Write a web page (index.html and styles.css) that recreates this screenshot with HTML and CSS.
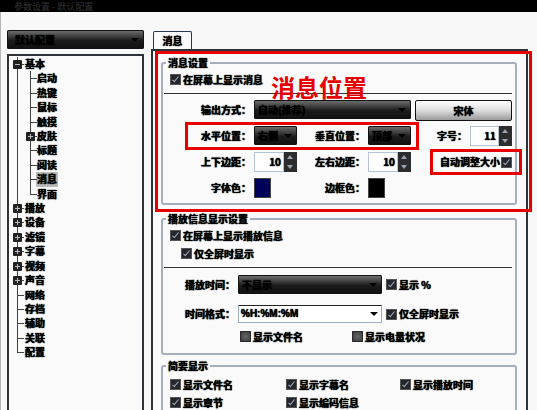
FILE: index.html
```html
<!DOCTYPE html>
<html lang="zh">
<head>
	<meta charset="utf-8">
	<title>消息设置</title>
	<link rel="stylesheet" href="styles.css">
</head>
<body>
	<div class="titlebar">参数设置 - 默认配置</div>

	<div class="main">
		<div class="sidebar">
			<div class="combo profile">默认配置</div>
			<div class="treeBox">
				<ul class="tree root">
					<li class="open"><span class="node">基本</span>
						<ul class="tree">
							<li>启动</li>
							<li>热键</li>
							<li>鼠标</li>
							<li>触摸</li>
							<li class="closed"><span class="node">皮肤</span></li>
							<li>标题</li>
							<li>阅读</li>
							<li><span class="selected">消息</span></li>
							<li>界面</li>
						</ul>
					</li>
					<li class="closed"><span class="node">播放</span></li>
					<li class="closed"><span class="node">设备</span></li>
					<li class="closed"><span class="node">滤镜</span></li>
					<li class="closed"><span class="node">字幕</span></li>
					<li class="closed"><span class="node">视频</span></li>
					<li class="closed"><span class="node">声音</span></li>
					<li>网络</li>
					<li>存档</li>
					<li>辅助</li>
					<li>关联</li>
					<li>配置</li>
				</ul>
			</div>
		</div>

		<div class="content">
			<div class="tab">消息</div>
			<div class="panel">
				<fieldset class="group first">
					<legend>消息设置</legend>
					<label class="check rowOne"><input type="checkbox" checked>在屏幕上显示消息</label>
					<div class="rule"></div>
					<div class="form">
						<span class="lbl">输出方式：</span>
						<div class="combo wide">自动(推荐)</div>
						<div class="fontBtn">宋体</div>

						<span class="lbl">水平位置：</span>
						<div class="combo">右侧</div>
						<span class="lbl">垂直位置：</span>
						<div class="combo">顶部</div>
						<span class="lbl">字号：</span>
						<div class="spin"><span class="val">11</span><span class="arrows"></span></div>

						<span class="lbl">上下边距：</span>
						<div class="spin"><span class="val">10</span><span class="arrows"></span></div>
						<span class="lbl">左右边距：</span>
						<div class="spin"><span class="val">10</span><span class="arrows"></span></div>
						<label class="check autoSize">自动调整大小<input type="checkbox" checked></label>

						<span class="lbl">字体色：</span>
						<div class="swatch navy"></div>
						<span class="lbl">边框色：</span>
						<div class="swatch black"></div>
					</div>
				</fieldset>

				<fieldset class="group second">
					<legend>播放信息显示设置</legend>
					<label class="check rowOne"><input type="checkbox" checked>在屏幕上显示播放信息</label>
					<label class="check rowSub"><input type="checkbox" checked>仅全屏时显示</label>
					<div class="rule"></div>
					<div class="timeForm">
						<span class="lbl">播放时间：</span>
						<div class="combo">不显示</div>
						<label class="check"><input type="checkbox" checked>显示 %</label>

						<span class="lbl">时间格式：</span>
						<div class="textCombo">%H:%M:%M</div>
						<label class="check"><input type="checkbox" checked>仅全屏时显示</label>
					</div>
					<div class="extras">
						<label class="check"><input type="checkbox">显示文件名</label>
						<label class="check"><input type="checkbox">显示电量状况</label>
					</div>
				</fieldset>

				<fieldset class="group third">
					<legend>简要显示</legend>
					<div class="brief">
						<label class="check"><input type="checkbox" checked>显示文件名</label>
						<label class="check"><input type="checkbox" checked>显示字幕名</label>
						<label class="check"><input type="checkbox" checked>显示播放时间</label>
						<label class="check"><input type="checkbox" checked>显示章节</label>
						<label class="check"><input type="checkbox" checked>显示编码信息</label>
					</div>
				</fieldset>
			</div>
		</div>
	</div>

	<!-- red annotations drawn over the dialog -->
	<div class="mark markMain"></div>
	<div class="mark markPos"></div>
	<div class="mark markAuto"></div>
	<div class="markTitle">消息位置</div>
</body>
</html>
```

FILE: styles.css
```css
:root {
	--ink: #000;
	--red: #e60000;
	--frame: #2f3338;
	--groupLine: #a3afbd;
}

html, body {
	margin: 0;
	height: 100%;
}

body {
	position: relative;
	width: 537px;
	height: 410px;
	overflow: hidden;
	background-color: #f8f8f8;
	font-family: "Noto Sans CJK SC", "Liberation Sans", sans-serif;
	font-size: 10px;
	font-weight: 700;
	line-height: 12px;
	color: var(--ink);
	text-shadow: 0 0 1px #000, 0 0 1px rgba(0, 0, 0, .8);
}

.titlebar {
	height: 12px;
	padding-left: 14px;
	background-color: #000;
	color: #333;
	font-size: 9px;
	font-weight: 400;
	line-height: 13px;
	text-shadow: none;
}

.main {
	display: flex;
	height: 398px;
	padding-left: 6px;
	border-left: 1px solid #b5b5b5;
}

/* left column */
.sidebar {
	width: 137px;
	margin-right: 7px;
	padding-top: 18px;
	flex: none;
}

.combo {
	position: relative;
	height: 19px;
	padding-left: 4px;
	border-radius: 2px;
	line-height: 19px;
	background: linear-gradient(#757575, #1c1c1c 55%, #101010);
	box-shadow: inset 0 0 0 1px #111;
}

.combo::after {
	content: "";
	position: absolute;
	right: 5px;
	top: 8px;
	border: 4px solid transparent;
	border-top: 4px solid #000;
	border-bottom: 0;
}

.profile {
	padding-left: 8px;
}

.treeBox {
	height: 356px;
	margin-top: 5px;
	border: 2px solid var(--frame);
	border-bottom: 0;
	background-color: #fafafa;
	box-sizing: border-box;
}

.tree {
	list-style: none;
	margin: 0;
	padding: 0;
	position: relative;
}

.tree::before {
	content: "";
	position: absolute;
	left: 0;
	top: 0;
	bottom: 7px;
	width: 1px;
	background-color: #444;
}

.tree li {
	position: relative;
	padding-left: 8px;
	line-height: 14.4px;
}

.tree li::before {
	content: "";
	position: absolute;
	left: 0;
	top: 7px;
	width: 7px;
	height: 1px;
	background-color: #444;
}

.root {
	margin-left: 8px;
	margin-top: 1px;
}

.root > li {
	padding-left: 8px;
}

.tree .tree {
	margin-left: 5px;
}

.tree .tree li {
	padding-left: 7px;
}

.node {
	display: block;
}

.open > .node::before,
.closed > .node::before {
	content: "";
	position: absolute;
	left: -4px;
	top: 3px;
	width: 9px;
	height: 9px;
	border-radius: 1px;
	background-color: #222;
	z-index: 1;
}

.open > .node::after,
.closed > .node::after {
	content: "";
	position: absolute;
	left: -2px;
	top: 7px;
	width: 5px;
	height: 1px;
	background-color: #bbb;
	z-index: 2;
}

.closed > .node::after {
	background:
		linear-gradient(#bbb, #bbb) center / 1px 5px no-repeat,
		linear-gradient(#bbb, #bbb) center / 5px 1px no-repeat;
	height: 5px;
	top: 5px;
}

.selected {
	display: inline-block;
	margin-left: -1px;
	padding: 0 1px;
	background-color: #b9b9b9;
}

/* right column */
.content {
	width: 377px;
	padding-top: 19px;
	flex: none;
}

.tab {
	width: 37px;
	height: 17px;
	margin-left: 2px;
	border: 1px solid #27374f;
	border-bottom: 0;
	border-radius: 2px 2px 0 0;
	background-color: #fafafa;
	text-align: center;
	line-height: 17px;
}

.panel {
	height: 361px;
	padding: 6px 10px 0 8px;
	border: 2px solid var(--frame);
	border-bottom: 0;
	background-color: #fafafa;
	box-sizing: border-box;
}

.group {
	width: 356px;
	margin: 0;
	padding: 0;
	border: 2px solid var(--groupLine);
	border-radius: 3px;
	box-sizing: border-box;
	min-width: 0;
}

.group legend {
	margin-left: 3px;
	padding: 0 2px;
	line-height: 12px;
}

.first {
	height: 148px;
}

.second {
	height: 142px;
	margin-top: 8px;
}

.third {
	height: 70px;
	margin-top: 5px;
}

.check {
	display: flex;
	align-items: center;
	gap: 2px;
	height: 11px;
	white-space: nowrap;
}

.check input {
	appearance: none;
	position: relative;
	width: 11px;
	height: 11px;
	margin: 0;
	flex: none;
	border-radius: 1px;
	background: radial-gradient(#666, #333);
	box-shadow: inset 0 0 0 1px #2a2a2a;
}

.check input:checked {
	background: #23262c;
	box-shadow: inset 0 0 0 1px #555;
}

.check input:checked::after {
	content: "";
	position: absolute;
	left: 4px;
	top: 1px;
	width: 2px;
	height: 6px;
	border-right: 1px solid #aab;
	border-bottom: 1px solid #aab;
	transform: rotate(40deg);
}

.rowOne {
	margin: 5px 0 0 7px;
}

.rowSub {
	margin: 7px 0 0 18px;
}

.rule {
	height: 1px;
	margin: 8px 3px 0 1px;
	background-color: #333;
}

.form {
	display: grid;
	grid-template-columns: 91px 43px 71px 43px 59px 42px;
	grid-auto-rows: 20px;
	row-gap: 6px;
	margin-top: 6px;
}

.lbl {
	align-self: center;
	padding-right: 3px;
	margin-left: -10px;
	text-align: right;
	white-space: nowrap;
}

.wide {
	grid-column: span 3;
}

.fontBtn {
	grid-column: span 2;
	height: 19px;
	margin-left: 4px;
	border: 1px solid #111;
	border-radius: 2px;
	text-align: center;
	line-height: 19px;
	background: linear-gradient(#fff, #ddd 50%, #9a9a9a);
}

.spin {
	display: flex;
	height: 20px;
	box-sizing: border-box;
}

.val {
	flex: 1;
	padding-right: 2px;
	border: 1px solid #b6c3d6;
	background-color: #fff;
	text-align: right;
	line-height: 18px;
}

.arrows {
	position: relative;
	width: 13px;
	background-color: #2c2c2e;
}

.arrows::before,
.arrows::after {
	content: "";
	position: absolute;
	left: 3px;
	border: 3px solid transparent;
}

.arrows::before {
	top: 3px;
	border-top: 0;
	border-bottom: 4px solid #9aa3b0;
}

.arrows::after {
	bottom: 3px;
	border-bottom: 0;
	border-top: 4px solid #9aa3b0;
}

.autoSize {
	grid-column: span 2;
	align-self: center;
	justify-self: end;
	gap: 1px;
}

.swatch {
	width: 17px;
	height: 20px;
	border: 1px solid #444;
	box-sizing: border-box;
}

.navy {
	background-color: #000058;
}

.black {
	background-color: #000;
}

.timeForm {
	display: grid;
	grid-template-columns: 75px 144px 1fr;
	grid-template-rows: 19px 18px;
	row-gap: 11px;
	margin-top: 7px;
	align-items: center;
}

.timeForm .check {
	margin-left: 4px;
}

.textCombo {
	position: relative;
	height: 18px;
	padding-left: 2px;
	border: 1px solid #9fadbf;
	border-top-color: #222;
	background-color: #fff;
	line-height: 16px;
	box-sizing: border-box;
	font-family: "Liberation Sans", sans-serif;
}

.textCombo::after {
	content: "";
	position: absolute;
	right: 3px;
	top: 6px;
	border: 4px solid transparent;
	border-top: 4px solid #000;
	border-bottom: 0;
}

.extras {
	display: grid;
	grid-template-columns: 112px 1fr;
	margin: 8px 0 0 77px;
}

.brief {
	display: grid;
	grid-template-columns: 116px 114px 1fr;
	row-gap: 7px;
	margin: 7px 0 0 7px;
}

/* annotations */
.mark {
	position: absolute;
	border: 3px solid var(--red);
	box-sizing: border-box;
}

.markMain {
	left: 155px;
	top: 51px;
	width: 377px;
	height: 161px;
}

.markPos {
	left: 185px;
	top: 122px;
	width: 234px;
	height: 28px;
}

.markAuto {
	left: 430px;
	top: 149px;
	width: 92px;
	height: 26px;
}

.markTitle {
	position: absolute;
	left: 271px;
	top: 72px;
	font-size: 24px;
	line-height: 30px;
	color: var(--red);
	text-shadow: none;
}
```
